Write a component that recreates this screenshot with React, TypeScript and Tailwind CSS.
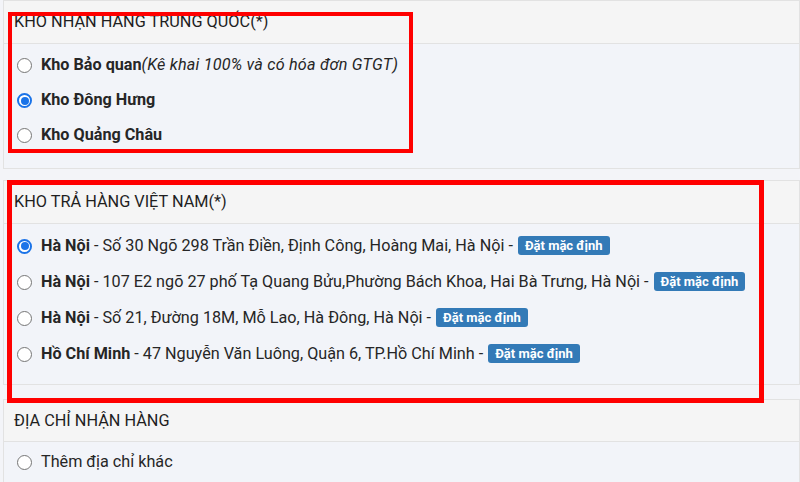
import React from 'react';

function Radio({ checked }: { checked?: boolean }) {
  if (checked) {
    return (
      <span className="w-[15px] h-[15px] rounded-full border-[2px] border-[#1a73e8] bg-white flex items-center justify-center shrink-0">
        <span className="w-[8px] h-[8px] rounded-full bg-[#1a73e8]" />
      </span>
    );
  }
  return <span className="w-[15px] h-[15px] rounded-full border border-[#767676] bg-white shrink-0" />;
}

function Badge() {
  return (
    <span className="ml-[5px] inline-flex items-center h-[19px] px-[7px] rounded-[3px] bg-[#337ab7] text-white text-[13px] font-bold leading-none">
      Đặt mặc định
    </span>
  );
}

function Row({ checked, h, children }: any) {
  return (
    <div className={`flex items-center gap-[9px] pl-[13px] ${h}`}>
      <Radio checked={checked} />
      <div className="flex items-center whitespace-nowrap">{children}</div>
    </div>
  );
}

function Panel({ title, headerH, bodyCls, children }: any) {
  return (
    <div className="border border-[#e2e2e2] bg-[#f2f4f9]">
      <div className={`${headerH} flex items-center pl-[10px] pt-[1px] bg-[#f5f5f5] border-b border-[#e2e2e2] text-[16.3px] text-[#1f1f1f]`}>
        {title}
      </div>
      <div className={bodyCls}>{children}</div>
    </div>
  );
}

const addresses = [
  { city: 'Hà Nội', addr: 'Số 30 Ngõ 298 Trần Điền, Định Công, Hoàng Mai, Hà Nội', checked: true },
  { city: 'Hà Nội', addr: '107 E2 ngõ 27 phố Tạ Quang Bửu,Phường Bách Khoa, Hai Bà Trưng, Hà Nội' },
  { city: 'Hà Nội', addr: 'Số 21, Đường 18M, Mỗ Lao, Hà Đông, Hà Nội' },
  { city: 'Hồ Chí Minh', addr: '47 Nguyễn Văn Luông, Quận 6, TP.Hồ Chí Minh' },
];

export default function App() {
  return (
    <div className="relative w-[800px] h-[482px] overflow-hidden bg-[#f3f4f8] pl-[3px] text-[#262626] text-[16.2px]" style={{ fontFamily: 'Roboto, "Noto Sans", sans-serif' }}>
      <div className="flex flex-col gap-[11px]">
        <Panel title="KHO NHẬN HÀNG TRUNG QUỐC(*)" headerH="h-[43px]" bodyCls="pt-[4px] pb-[15px]">
          <Row h="h-[35px]">
            <span className="font-bold">Kho Bảo quan</span>
            <span className="italic tracking-[0.2px]">(Kê khai 100% và có hóa đơn GTGT)</span>
          </Row>
          <Row h="h-[35px]" checked>
            <span className="font-bold">Kho Đông Hưng</span>
          </Row>
          <Row h="h-[35px]">
            <span className="font-bold">Kho Quảng Châu</span>
          </Row>
        </Panel>

        <div className="flex flex-col gap-[14px]">
          <Panel title="KHO TRẢ HÀNG VIỆT NAM(*)" headerH="h-[43px]" bodyCls="pt-[4px] pb-[12px]">
            {addresses.map((a, i) => (
              <Row key={i} h="h-[36px]" checked={a.checked}>
                <span className="font-bold">{a.city}</span>
                <span>&nbsp;- {a.addr} -</span>
                <Badge />
              </Row>
            ))}
          </Panel>

          <Panel title="ĐỊA CHỈ NHẬN HÀNG" headerH="h-[42px]" bodyCls="pt-[2px] pb-[10px]">
            <Row h="h-[36px]">
              <span>Thêm địa chỉ khác</span>
            </Row>
          </Panel>
        </div>
      </div>

      <div className="absolute left-[8px] top-[12px] w-[405px] h-[141px] border-4 border-[#ff0000] pointer-events-none" />
      <div className="absolute left-[7px] top-[180px] w-[757px] h-[223px] border-[5px] border-[#ff0000] pointer-events-none" />
    </div>
  );
}
